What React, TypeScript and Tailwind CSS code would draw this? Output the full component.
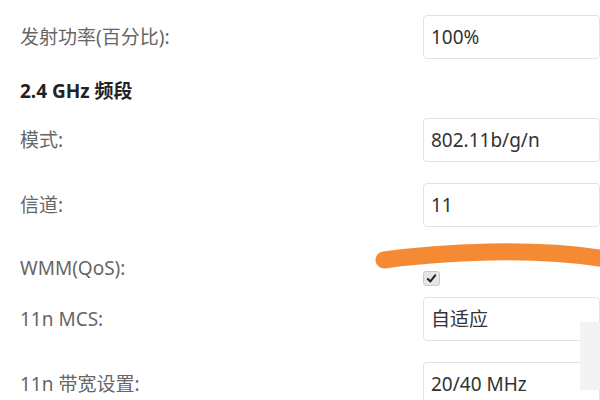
const font = { fontFamily: '"Noto Sans", "Noto Sans CJK SC", sans-serif' };

const Label = ({ children }: { children: React.ReactNode }) => (
  <div className="w-[403px] shrink-0 text-[19px] text-[#666]">{children}</div>
);

const Field = ({ value }: { value: string }) => (
  <div className="flex h-[44px] flex-1 items-center rounded-[4px] border border-[#e2e2e2] bg-white pl-[7px] text-[19px] text-[#333]">
    {value}
  </div>
);

const Row = ({ label, value, className = "" }: { label: string; value: string; className?: string }) => (
  <div className={`flex items-center ${className}`}>
    <Label>{label}</Label>
    <Field value={value} />
  </div>
);

const App = () => {
  return (
    <div className="relative h-[400px] w-[600px] overflow-hidden bg-white pl-[20px] pt-[15px]" style={font}>
      <Row label="发射功率(百分比):" value="100%" />

      {/* 2.4G section */}
      <div className="mt-[17px] h-[30px] text-[19px] font-bold leading-[30px] text-[#222]">2.4 GHz 频段</div>

      <Row className="mt-[12px]" label="模式:" value="802.11b/g/n" />
      <Row className="mt-[21px]" label="信道:" value="11" />

      <div className="flex h-[70px] items-start">
        <div className="mt-[27px] flex items-center">
          <Label>WMM(QoS):</Label>
        </div>
        <div className="mt-[44px] flex h-[15px] w-[17px] items-center justify-center rounded-[3px] border border-[#c8c8c8] bg-[#e6e6e6]">
          <svg viewBox="0 0 12 12" className="h-[11px] w-[11px]">
            <path d="M2 6.5 L4.8 9.2 L10 2.5" fill="none" stroke="#222" strokeWidth="2.2" strokeLinecap="round" strokeLinejoin="round" />
          </svg>
        </div>
      </div>

      <Row label="11n MCS:" value="自适应" />
      <Row className="mt-[21px]" label="11n 带宽设置:" value="20/40 MHz" />

      {/* side panel peeking in */}
      <div className="absolute left-[580px] top-[322px] h-[68px] w-[20px] bg-[#f3f3f3]" />

      {/* orange marker stroke */}
      <svg className="absolute left-0 top-0" width="600" height="400" viewBox="0 0 600 400">
        <path
          d="M384 260 C 420 255, 450 253, 490 252 C 540 251, 575 254, 605 259"
          fill="none"
          stroke="#f58a34"
          strokeWidth="17"
          strokeLinecap="round"
        />
      </svg>
    </div>
  );
};

export default App;
